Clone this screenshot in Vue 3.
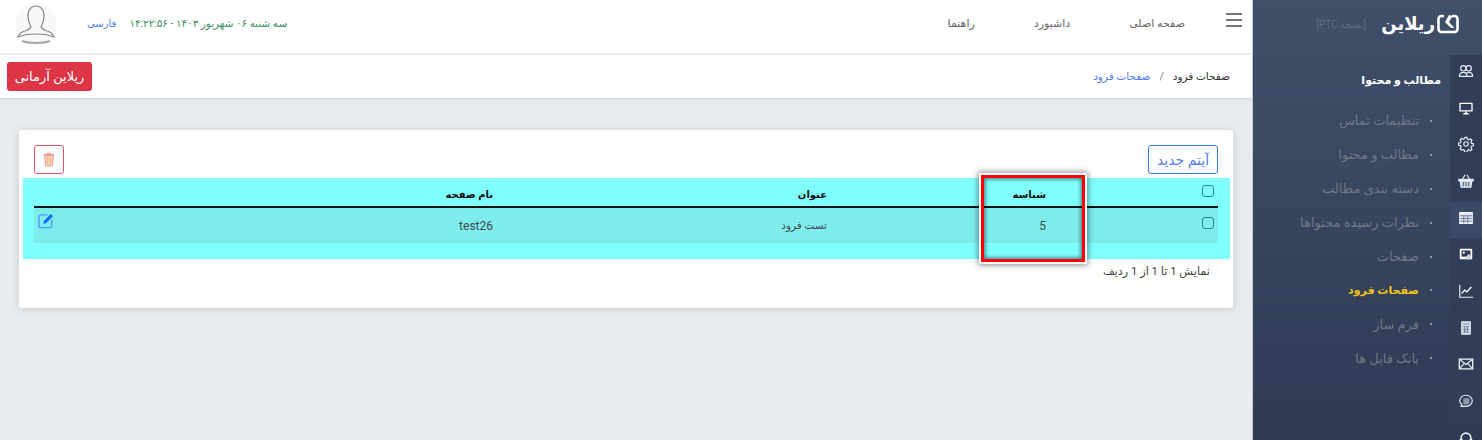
<script setup>
const topLinks = ['صفحه اصلی', 'داشبورد', 'راهنما'];
const menu = [
  { label: 'تنظیمات تماس' },
  { label: 'مطالب و محتوا' },
  { label: 'دسته بندی مطالب' },
  { label: 'نظرات رسیده محتواها' },
  { label: 'صفحات' },
  { label: 'صفحات فرود', active: true },
  { label: 'فرم ساز' },
  { label: 'بانک فایل ها' }
];
const railIcons = ['users', 'monitor', 'gear', 'basket', 'table', 'image', 'chart', 'calc', 'mail', 'chat', 'head'];
</script>

<template>
  <div class="page" dir="rtl">
    <aside class="sidebar">
      <div class="brand">
        <div class="logo">
          <svg width="22" height="20" viewBox="0 0 22 20" fill="none">
            <path d="M7 2H4.500A3 3 0 0 0 1.500 5v10a3 3 0 0 0 3 3h13a3 3 0 0 0 3-3V5a3 3 0 0 0-3-3H15" stroke="#fff" stroke-width="2.600" />
            <path d="M12 1L8 8l6 6h3.500L12 8l3.500-6z" fill="#fff" />
          </svg>
          <span class="logo-text">ریلاین</span>
        </div>
        <span class="version">[نسخه PTC]</span>
      </div>
      <div class="side-body">
        <nav class="rail">
          <div v-for="icon in railIcons" :key="icon" class="rail-item" :class="{ current: icon === 'table', last: icon === 'head' }">
            <svg width="16" height="16" viewBox="0 0 18 18" fill="none" stroke="#e8edf5" stroke-width="1.300">
              <template v-if="icon === 'users'">
                <circle cx="6" cy="6" r="3" /><circle cx="12" cy="6" r="3" />
                <path d="M1.500 15c0-3 2-4.500 4.500-4.500S10 12 10 15zM8.500 15h8c0-3-2-4.500-4.500-4.500-1 0-2 .3-2.700 .8" />
              </template>
              <template v-else-if="icon === 'monitor'">
                <rect x="1.500" y="3" width="15" height="10" rx="1" fill="#fff" stroke="none" />
                <rect x="3" y="4.500" width="12" height="7" fill="#323d58" stroke="none" />
                <path d="M6 15.500h6M9 13v2" stroke="#fff" stroke-width="1.800" />
              </template>
              <template v-else-if="icon === 'gear'">
                <circle cx="9" cy="9" r="2.500" />
                <path d="M7.800 1.500h2.400l.4 2.200 1.500.7 1.900-1.200 1.700 1.700-1.200 1.900.7 1.500 2.200.4v2.400l-2.200.4-.7 1.500 1.200 1.900-1.700 1.700-1.900-1.200-1.500.7-.4 2.200H7.800l-.4-2.200-1.500-.7L4 15.900l-1.700-1.700 1.200-1.900-.7-1.500-2.200-.4V8l2.200-.4.700-1.500L2.300 4.200 4 2.500l1.900 1.200 1.500-.7z" />
              </template>
              <template v-else-if="icon === 'basket'">
                <path d="M5 7l3-5M13 7l-3-5" />
                <path d="M1 7h16v2H1z" fill="#fff" />
                <path d="M2.500 9l1 7h11l1-7z" fill="#cfd6e4" />
                <path d="M6 10v5M9 10v5M12 10v5" stroke="#5a6885" />
              </template>
              <template v-else-if="icon === 'table'">
                <rect x="2" y="3" width="14" height="12" fill="#dfe6f2" stroke="#fff" />
                <path d="M2 6.500h14M2 9.500h14M2 12.500h14M6.500 6.500V15M11 6.500V15" stroke="#5a6885" stroke-width=".9" />
              </template>
              <template v-else-if="icon === 'image'">
                <rect x="2" y="3" width="14" height="12" rx="1" fill="#fff" stroke="none" />
                <rect x="4" y="5" width="10" height="7" fill="#323d58" stroke="none" />
                <circle cx="6.500" cy="7.500" r="1.200" fill="#fff" stroke="none" />
                <path d="M9 12l3-3 2 2v4H8z" fill="#cfd6e4" stroke="none" />
              </template>
              <template v-else-if="icon === 'chart'">
                <path d="M2 2v14h15" />
                <path d="M4 12l3.500-4 2.500 2 5-5.500" stroke="#fff" stroke-width="1.500" />
              </template>
              <template v-else-if="icon === 'calc'">
                <rect x="3.500" y="1.500" width="11" height="15" rx="1" fill="#dfe6f2" stroke="none" />
                <path d="M5 4.500h8M5 7.500h8M5 10.500h8M5 13.500h8M7.500 7.500v7M10.500 7.500v7" stroke="#5a6885" stroke-width=".9" />
              </template>
              <template v-else-if="icon === 'mail'">
                <rect x="1.500" y="3.500" width="15" height="11" fill="#323d58" stroke="#e8edf5" stroke-width="1.500" />
                <path d="M2 4l7 5.500L16 4M2 14l5-5.500M16 14l-5-5.500" />
              </template>
              <template v-else-if="icon === 'chat'">
                <path d="M9 2.500c4 0 7 2.700 7 6.200s-3 6.300-7 6.300H3.500l1-1.800C3 12 2 10.500 2 8.700 2 5.200 5 2.500 9 2.500z" />
                <path d="M6 6h7v5l-2 2H6z" fill="#8d98ad" stroke="none" />
              </template>
              <template v-else>
                <path d="M3.500 15V9a5.500 5.500 0 0 1 11 0v6" stroke-width="1.800" />
                <rect x="2" y="10" width="3" height="6" fill="#fff" stroke="none" />
                <rect x="13" y="10" width="3" height="6" fill="#fff" stroke="none" />
              </template>
            </svg>
          </div>
        </nav>
        <div class="side-main">
          <h2 class="side-title">مطالب و محتوا</h2>
          <ul class="side-menu">
            <li v-for="item in menu" :key="item.label" :class="{ active: item.active }">
              <span class="bullet"></span>{{ item.label }}
            </li>
          </ul>
        </div>
      </div>
    </aside>

    <main class="content">
      <header class="topbar">
        <div class="top-right">
          <div class="burger"><span></span><span></span><span></span></div>
          <a v-for="link in topLinks" :key="link" class="top-link">{{ link }}</a>
        </div>
        <div class="top-left">
          <span class="clock">سه شنبه ۰۶ شهریور ۱۴۰۳ - ۱۴:۲۲:۵۶</span>
          <a class="lang">فارسی</a>
          <svg class="avatar" width="42" height="42" viewBox="0 0 42 42" fill="none">
            <circle cx="21" cy="21" r="21" fill="#f8f8f8" />
            <path d="M16 24c-1-2-3-5-3-11 0-7 4-10 8-10s8 3 8 10c0 6-2 9-3 11 1 2 3 3 6 4 4 1 6 3 7 6-5-2-12-3-18-3s-13 1-18 3c1-3 3-5 7-6 3-1 5-2 6-4z" stroke="#858585" stroke-width="1.200" />
            <path d="M7 38c5 2.500 23 2.500 28 0" stroke="#a8a8a8" stroke-width="2" />
          </svg>
        </div>
      </header>

      <div class="crumbbar">
        <div class="crumbs">
          <span class="crumb-cur">صفحات فرود</span>
          <span class="crumb-sep">/</span>
          <a class="crumb-link">صفحات فرود</a>
        </div>
        <button class="btn-red">ریلاین آرمانی</button>
      </div>

      <section class="card">
        <div class="card-actions">
          <button class="btn-new">آیتم جدید</button>
          <button class="btn-del">
            <svg width="12" height="15" viewBox="0 0 14 17" fill="none">
              <path d="M5 2.500V1.200h4v1.300" stroke="#e88a8a" />
              <path d="M1 3h12" stroke="#e88a8a" stroke-width="1.500" />
              <path d="M2 4l1 12h8l1-12z" fill="#f9d9b8" stroke="#e88a8a" />
              <path d="M5.500 6v8M8.500 6v8" stroke="#e8a070" />
            </svg>
          </button>
        </div>
        <div class="table-wrap">
          <table>
            <thead>
              <tr>
                <th class="c-check"><span class="check"></span></th>
                <th class="c-id">شناسه</th>
                <th class="c-title">عنوان</th>
                <th class="c-name">نام صفحه</th>
                <th></th>
              </tr>
            </thead>
            <tbody>
              <tr>
                <td class="c-check"><span class="check"></span></td>
                <td class="c-id">5</td>
                <td class="c-title">تست فرود</td>
                <td class="c-name">test26</td>
                <td class="c-edit">
                  <svg width="17" height="17" viewBox="0 0 18 17" fill="none">
                    <path d="M10 2.500H3a2 2 0 0 0-2 2V14a2 2 0 0 0 2 2h9.500a2 2 0 0 0 2-2V8" stroke="#4d9bff" stroke-width="1.500" />
                    <path d="M5.500 12l.7-3L13.500 1.700l2.400 2.400L8.500 11.300z" fill="#0d6efd" />
                  </svg>
                </td>
              </tr>
            </tbody>
          </table>
        </div>
        <p class="summary">نمایش 1 تا 1 از 1 ردیف</p>
        <div class="highlight"></div>
      </section>
    </main>
  </div>
</template>

<style>
html, body {
  margin: 0;
  background: #e9ecef;
}
</style>

<style scoped>
.page {
  display: flex;
  width: 1482px;
  height: 440px;
  overflow: hidden;
  font-family: Roboto, "DejaVu Sans", sans-serif;
  color: #333;
  background: #e9ecef;
}

.sidebar {
  display: flex;
  flex-direction: column;
  flex: none;
  width: 230px;
  height: 440px;
  background: linear-gradient(#405069, #2f3a55);
  border-left: 1px solid #c8ccd2;
  box-sizing: border-box;
}

.brand {
  display: flex;
  align-items: center;
  flex: none;
  height: 55px;
  padding: 0 23px 7px 0;
  box-sizing: border-box;
}

.logo {
  display: flex;
  align-items: center;
  gap: 2px;
}

.logo-text {
  color: #fff;
  font-size: 18px;
  font-weight: 700;
  line-height: 20px;
}

.version {
  margin-right: 15px;
  color: #5d6a80;
  font-size: 10px;
}

.side-body {
  display: flex;
  flex: 1;
  min-height: 0;
}

.rail {
  flex: none;
  width: 32px;
}

.rail-item {
  display: flex;
  justify-content: center;
  align-items: center;
  height: 36.7px;
  background: #323d58;
}

.rail-item svg {
  margin-top: -5px;
}

.rail-item.current {
  background: #3c4a66;
}

.rail-item.last {
  background: transparent;
}

.side-main {
  flex: 1;
  min-width: 0;
}

.side-title {
  margin: 17px 9px 0 0;
  color: #fff;
  font-size: 11px;
  font-weight: 700;
  line-height: 18px;
}

.side-menu {
  margin: 14px 0 0;
  padding: 0;
  list-style: none;
}

.side-menu li {
  display: flex;
  align-items: center;
  height: 33.9px;
  color: #6f7786;
  font-size: 13px;
  white-space: nowrap;
}

.side-menu li.active {
  color: #f3c317;
  font-size: 11px;
  font-weight: 700;
}

.bullet {
  width: 2px;
  height: 2px;
  margin: 0 18px 0 11px;
  border-radius: 50%;
  background: #aab2c0;
}

.content {
  flex: 1;
  min-width: 0;
}

.topbar {
  display: flex;
  justify-content: space-between;
  align-items: center;
  height: 53px;
  background: #fff;
  border-bottom: 2px solid #f0f1f3;
}

.top-right {
  display: flex;
  align-items: center;
  gap: 59px;
  padding-right: 10px;
}

.burger {
  display: flex;
  flex-direction: column;
  gap: 4px;
  width: 16px;
  margin: -13px 0 0 -18px;
}

.burger span {
  height: 2px;
  background: #777;
}

.top-link {
  margin-top: -7px;
  color: #666;
  font-size: 11px;
  white-space: nowrap;
}

.top-left {
  display: flex;
  align-items: center;
  padding-left: 15px;
}

.clock {
  margin-top: -7px;
  color: #3f8f63;
  font-size: 10.4px;
}

.lang {
  margin: -7px 13px 0 30px;
  color: #4f7cff;
  font-size: 10px;
}

.avatar {
  margin-top: -5px;
}

.crumbbar {
  display: flex;
  justify-content: space-between;
  align-items: center;
  height: 43px;
  padding: 0 22px 0 7px;
  background: #fff;
  box-shadow: 0 1px 3px rgba(0, 0, 0, 0.12);
}

.crumbs {
  display: flex;
  align-items: center;
  font-size: 10.5px;
}

.crumb-cur {
  color: #333;
}

.crumb-sep {
  margin: 0 9px;
  color: #777;
}

.crumb-link {
  color: #4f7cff;
}

.btn-red {
  width: 85px;
  height: 29px;
  padding: 0;
  border: none;
  border-radius: 3px;
  background: #dc3545;
  color: #fff;
  font-family: inherit;
  font-size: 13px;
}

.card {
  position: relative;
  height: 178px;
  margin: 32px 19px 0;
  background: #fff;
  border-radius: 3px;
  box-shadow: 0 1px 8px rgba(0, 0, 0, 0.14);
}

.card-actions {
  display: flex;
  justify-content: space-between;
  padding: 15px 15px 0;
}

.btn-new {
  width: 70px;
  height: 29px;
  padding: 0;
  border: 1px solid #2f7bea;
  border-radius: 3px;
  background: #fff;
  color: #4f7cff;
  font-family: inherit;
  font-size: 14px;
}

.btn-del {
  display: flex;
  justify-content: center;
  align-items: center;
  width: 30px;
  height: 29px;
  padding: 0;
  border: 1px solid #dc5565;
  border-radius: 3px;
  background: #fff;
}

.table-wrap {
  height: 81px;
  margin: 4px 3px 0 4px;
  padding: 0 12px 0 11px;
  background: #80ffff;
}

table {
  width: 100%;
  border-collapse: collapse;
  table-layout: fixed;
  font-size: 10.5px;
}

th {
  height: 24px;
  padding: 4px 0 0;
  border-bottom: 2px solid #111;
  color: #111;
  font-size: 10px;
  font-weight: 700;
  text-align: right;
}

td {
  height: 35px;
  padding: 0;
  background: #7fecec;
  color: #3c4a50;
}

.c-check {
  width: 172px;
}

.check {
  display: block;
  width: 10px;
  height: 10px;
  margin: -5px 4px 0 0;
  border: 1px solid #1c8c8c;
  border-radius: 3px;
}

th .check {
  margin-top: -7px;
}

.c-id {
  width: 219px;
}

td.c-id {
  font-size: 12px;
}

.c-title {
  width: 334px;
}

td.c-name {
  font-size: 12px;
}

.c-edit svg {
  display: block;
  margin: -10px 4px 0 auto;
  margin-left: 4px;
  margin-right: auto;
}

.summary {
  margin: 6px 23px 0 0;
  color: #444;
  font-size: 11.3px;
}

.highlight {
  position: absolute;
  left: 962px;
  top: 45px;
  width: 98px;
  height: 81px;
  border: 3px solid #f00;
  outline: 2px solid #fff;
  box-shadow: 0 0 6px 3px rgba(0, 0, 0, 0.45), inset 0 0 4px 1px rgba(0, 0, 0, 0.55);
}
</style>
